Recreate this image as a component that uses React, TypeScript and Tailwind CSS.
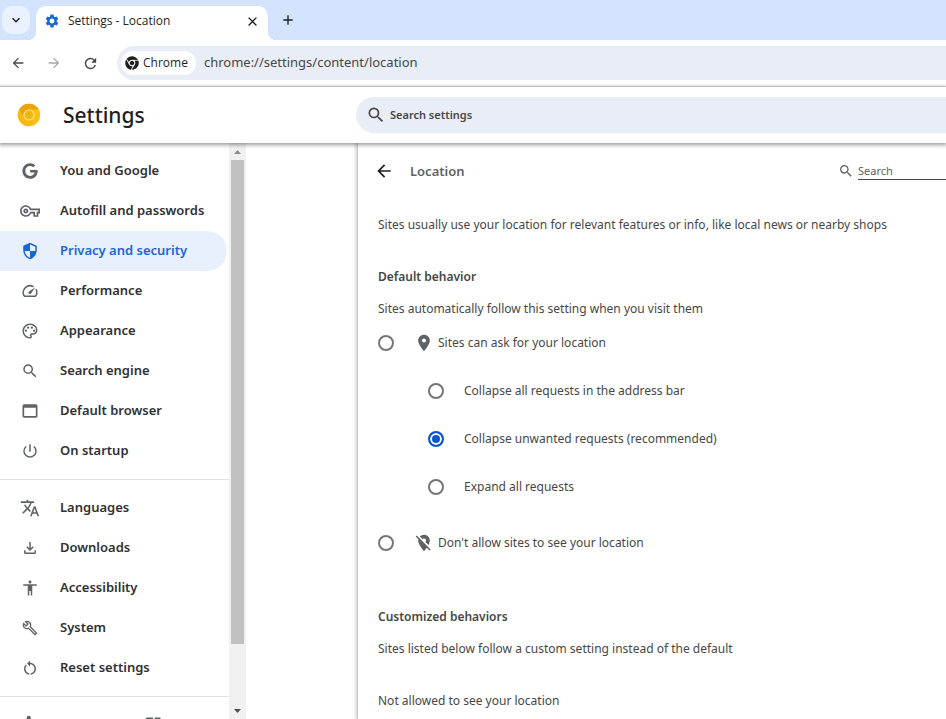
import React from "react";
import {
  MdAccessibility,
  MdAdd,
  MdArrowBack,
  MdArrowForward,
  MdClose,
  MdExpandMore,
  MdExtension,
  MdLocationOff,
  MdLocationOn,
  MdOpenInNew,
  MdOutlineBuild,
  MdOutlineFileDownload,
  MdOutlinePalette,
  MdOutlineSpeed,
  MdOutlineVpnKey,
  MdOutlineWebAsset,
  MdPowerSettingsNew,
  MdRefresh,
  MdRestartAlt,
  MdSearch,
  MdSecurity,
  MdSettings,
  MdTranslate,
} from "react-icons/md";
import { FaChrome, FaGoogle } from "react-icons/fa";

const menuGroups = [
  [
    { label: "You and Google", icon: FaGoogle, size: 16 },
    { label: "Autofill and passwords", icon: MdOutlineVpnKey, size: 20 },
    { label: "Privacy and security", icon: MdSecurity, size: 18, active: true },
    { label: "Performance", icon: MdOutlineSpeed, size: 18 },
    { label: "Appearance", icon: MdOutlinePalette, size: 18 },
    { label: "Search engine", icon: MdSearch, size: 18 },
    { label: "Default browser", icon: MdOutlineWebAsset, size: 20 },
    { label: "On startup", icon: MdPowerSettingsNew, size: 18 },
  ],
  [
    { label: "Languages", icon: MdTranslate, size: 20 },
    { label: "Downloads", icon: MdOutlineFileDownload, size: 18 },
    { label: "Accessibility", icon: MdAccessibility, size: 18 },
    { label: "System", icon: MdOutlineBuild, size: 16 },
    { label: "Reset settings", icon: MdRestartAlt, size: 18 },
  ],
];

const requestOptions = [
  { value: "all", label: "Collapse all requests in the address bar" },
  { value: "unwanted", label: "Collapse unwanted requests (recommended)" },
  { value: "expand", label: "Expand all requests" },
];

const radioClass =
  "m-0 size-4 shrink-0 appearance-none rounded-full border-2 border-[#757575] bg-white checked:border-[#0b57d0] checked:bg-[#0b57d0] checked:shadow-[inset_0_0_0_2px_white]";

const CanaryLogo = () => (
  <svg viewBox="0 0 24 24" className="size-6" aria-hidden="true">
    <circle cx="12" cy="12" r="11.200" fill="#fac015" />
    <path d="M2.300 6.400A11.200 11.200 0 0 1 21.700 6.400H12a5.600 5.600 0 0 0-4.850 8.400z" fill="#eda20f" />
    <path d="M2.300 6.400A11.200 11.200 0 0 0 12 23.200l4.850-5.600-9.700-2.800z" fill="#f5b912" />
    <circle cx="12" cy="12" r="5" fill="#f2b50f" stroke="#fde27c" strokeWidth="1.200" />
  </svg>
);

const TabStrip = () => (
  <div className="flex h-10 bg-[#d3e3fd] pt-1.5 font-['Open_Sans',sans-serif]">
    <div className="w-9 pl-0.5">
      <button
        className="flex size-7 items-center justify-center rounded-[10px] bg-[#e9f1fe] text-[#1f1f1f]"
        aria-label="Search tabs"
      >
        <MdExpandMore size={16} />
      </button>
    </div>
    <div className="relative flex w-58 items-center rounded-t-[10px] bg-white px-2 text-xs text-[#1f1f1f]">
      <span className="absolute bottom-0 -left-2 size-2 bg-[radial-gradient(circle_at_0_0,transparent_8px,white_8px)]" />
      <span className="absolute -right-2 bottom-0 size-2 bg-[radial-gradient(circle_at_100%_0,transparent_8px,white_8px)]" />
      <MdSettings size={16} className="mb-1 text-[#1a66d2]" />
      <span className="mb-1 ml-2 flex-1">Settings - Location</span>
      <button className="mb-1" aria-label="Close tab">
        <MdClose size={15} />
      </button>
    </div>
    <button className="ml-3 flex h-7 w-4 items-center justify-center text-[#1f1f1f]" aria-label="New tab">
      <MdAdd size={16} />
    </button>
  </div>
);

const Toolbar = () => (
  <div className="flex h-[47px] items-center border-b border-[#dcdfe3] pl-2.5 text-[#474747]">
    <button aria-label="Back">
      <MdArrowBack size={16} />
    </button>
    <button className="ml-5 text-[#a8a8a8]" aria-label="Forward">
      <MdArrowForward size={16} />
    </button>
    <button className="ml-5" aria-label="Reload">
      <MdRefresh size={17} />
    </button>
    <div className="ml-[18px] flex h-[34px] flex-1 items-center rounded-l-full bg-[#e9eef6] pl-1">
      <button className="flex h-6 items-center gap-1 rounded-full bg-white pr-2 pl-1 font-['Open_Sans',sans-serif] text-xs text-[#1f1f1f]">
        <FaChrome size={14} />
        Chrome
      </button>
      <input
        className="ml-2 min-w-0 flex-1 bg-transparent text-[13px] outline-none"
        aria-label="Address"
        defaultValue="chrome://settings/content/location"
      />
    </div>
  </div>
);

const Header = () => (
  <header className="relative z-10 flex h-14 items-center bg-white pl-[17px] shadow-[0_1px_4px_1px_rgba(0,0,0,0.4)]">
    <CanaryLogo />
    <h1 className="ml-[22px] w-[293px] text-[21px] leading-7 font-medium text-[#1f1f1f]">Settings</h1>
    <label className="flex h-9 flex-1 items-center gap-1 rounded-l-full bg-[#e9eef6] pl-2.5 text-[#474747]">
      <MdSearch size={20} />
      <input
        className="min-w-0 flex-1 bg-transparent text-[11px] font-semibold outline-none placeholder:text-[#474747]"
        placeholder="Search settings"
        aria-label="Search settings"
      />
    </label>
  </header>
);

const Sidebar = () => (
  <nav className="h-full w-[229px] shrink-0 overflow-hidden pt-2">
    {menuGroups.map((group, i) => (
      <div key={i} className={i > 0 ? "mt-2 border-t border-[#e3e3e3] pt-2" : ""}>
        {group.map((item) => (
          <a
            key={item.label}
            href="#"
            className={`mr-0.5 flex h-10 items-center rounded-r-full pl-5 text-[13px] font-semibold ${
              item.active ? "bg-[#e8f0fe] text-[#1967d2]" : "text-[#303134]"
            }`}
          >
            <span className={`flex w-5 justify-center ${item.active ? "-scale-x-100" : "text-[#5f6368]"}`}>
              <item.icon size={item.size} />
            </span>
            <span className="ml-5">{item.label}</span>
          </a>
        ))}
      </div>
    ))}
    <div className="mt-2 border-t border-[#e3e3e3] pt-2">
      <a href="#" aria-label="Extensions" className="flex h-10 items-center gap-[103px] pl-5 text-[#5f6368]">
        <MdExtension size={20} />
        <MdOpenInNew size={20} />
      </a>
    </div>
  </nav>
);

const Scrollbar = () => (
  <div className="flex w-[17px] shrink-0 flex-col items-center bg-[#f1f1f1]">
    <svg viewBox="0 0 17 17" className="size-[17px]" aria-hidden="true">
      <path d="M5 11h7L8.500 7z" fill="#8b8b8b" />
    </svg>
    <div className="h-[484px] w-[13px] bg-[#c1c1c1]" />
    <svg viewBox="0 0 17 17" className="mt-auto size-[17px]" aria-hidden="true">
      <path d="M5 7h7L8.500 11z" fill="#505050" />
    </svg>
  </div>
);

const LocationPage = () => {
  const [permission, setPermission] = React.useState("");
  const [request, setRequest] = React.useState("unwanted");

  return (
    <main className="ml-28 min-w-0 flex-1 overflow-hidden bg-white pl-5 text-xs leading-5 text-[#474747] shadow-[0_0_4px_1px_rgba(0,0,0,0.35)]">
      <div className="flex h-14 items-center">
        <button className="-ml-1 text-[#1f1f1f]" aria-label="Back to site settings">
          <MdArrowBack size={20} />
        </button>
        <h2 className="ml-4 flex-1 text-[13px] font-semibold text-[#5f6368]">Location</h2>
        <label className="flex items-center gap-1 text-[#5f6368]">
          <MdSearch size={16} />
          <input
            className="w-22 border-b border-[#474747] text-[11px] leading-4 outline-none placeholder:text-[#5f6368]"
            placeholder="Search"
            aria-label="Search sites"
          />
        </label>
      </div>

      <p className="mt-4 whitespace-nowrap">
        Sites usually use your location for relevant features or info, like local news or nearby shops
      </p>
      <h3 className="mt-8 font-semibold">Default behavior</h3>
      <p className="mt-3">Sites automatically follow this setting when you visit them</p>

      <label className="mt-2.5 flex h-7 items-center">
        <input
          type="radio"
          name="permission"
          className={radioClass}
          checked={permission === "ask"}
          onChange={() => setPermission("ask")}
        />
        <MdLocationOn size={20} className="ml-5 text-[#5f6368]" />
        <span className="ml-1">Sites can ask for your location</span>
      </label>
      <div className="mt-2.5 ml-[50px]">
        {requestOptions.map((option) => (
          <label key={option.value} className="flex h-12 items-center gap-5">
            <input
              type="radio"
              name="request"
              className={radioClass}
              checked={request === option.value}
              onChange={() => setRequest(option.value)}
            />
            {option.label}
          </label>
        ))}
      </div>
      <label className="mt-[18px] flex h-7 items-center">
        <input
          type="radio"
          name="permission"
          className={radioClass}
          checked={permission === "block"}
          onChange={() => setPermission("block")}
        />
        <MdLocationOff size={20} className="ml-5 text-[#5f6368]" />
        <span className="ml-1">Don't allow sites to see your location</span>
      </label>

      <h3 className="mt-[50px] font-semibold">Customized behaviors</h3>
      <p className="mt-3">Sites listed below follow a custom setting instead of the default</p>
      <p className="mt-8">Not allowed to see your location</p>
    </main>
  );
};

const App = () => {
  return (
    <div className="flex h-screen flex-col overflow-hidden bg-white font-['Noto_Sans',sans-serif]">
      <TabStrip />
      <Toolbar />
      <Header />
      <div className="flex min-h-0 flex-1">
        <Sidebar />
        <Scrollbar />
        <LocationPage />
      </div>
    </div>
  );
};

export default App;
